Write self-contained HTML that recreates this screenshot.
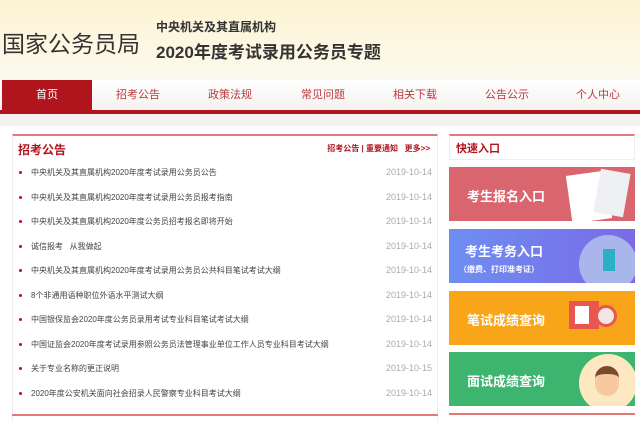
<!DOCTYPE html><html><head><meta charset="utf-8"><style>
*{margin:0;padding:0;box-sizing:border-box}
body{width:640px;height:422px;overflow:hidden;background:#fff;font-family:"Liberation Sans","Noto Sans CJK SC",sans-serif;position:relative}
.hd{position:absolute;left:0;top:0;width:640px;height:80px;background:linear-gradient(180deg,#fdf3d2,#fdf8e6 70%,#fbf9f0)}
.nav{position:absolute;top:80px;left:0;width:640px;height:31px;background:linear-gradient(#fff,#f4f2ee)}
.nav span{position:absolute;top:0;height:31px;line-height:31px;font-size:11px;color:#b83a40;width:90px;text-align:center}
.nav .on{background:#b0141d;color:#fff;left:2px}
.rl{position:absolute;top:110px;left:0;width:640px;height:4px;background:#b0141d}
.gs{position:absolute;top:114px;left:0;width:640px;height:12px;background:#f2f2f2}
.lp{position:absolute;left:12px;top:134px;width:426px;height:288px;border-top:2px solid #e37a7a;border-left:1px solid #eee;border-right:1px solid #eee}
.t{position:absolute;left:18px;top:141px;font-size:12px;color:#b0141d;font-weight:bold}
.more{position:absolute;right:210px;top:143px;font-size:8px;color:#b0141d;font-weight:bold}
.row{position:absolute;left:18px;font-size:8px;color:#444;width:414px}
.row:before{content:"";position:absolute;left:1px;top:4px;width:3px;height:3px;background:#b0141d;border-radius:50%}
.row i{font-style:normal;margin-left:13px}
.row b{position:absolute;right:0;top:0;color:#aaa;font-weight:normal;font-size:9px}
.sep{position:absolute;left:12px;top:414px;width:426px;height:2px;background:#e37a7a}
.rp{position:absolute;left:449px;top:134px;width:186px;height:26px;border:1px solid #eee;border-top:2px solid #e37a7a}
.rt{position:absolute;left:456px;top:140px;font-size:11px;color:#b0141d;font-weight:bold}
.bn{position:absolute;left:449px;width:186px;height:54px;color:#fff;font-weight:bold;font-size:13px;overflow:hidden}
.bn .x{position:absolute;left:18px;top:19px}
.bl{position:absolute;left:449px;top:413px;width:186px;height:2px;background:#e37a7a}
</style></head><body>
<div class="hd"></div>
<div style="position:absolute;left:2px;top:25px;font-size:23px;color:#333">国家公务员局</div>
<div style="position:absolute;left:156px;top:18px;font-size:12px;color:#333;font-weight:bold">中央机关及其直属机构</div>
<div style="position:absolute;left:156px;top:38px;font-size:17px;color:#333;font-weight:bold">2020年度考试录用公务员专题</div>
<div class="nav"><span class="on">首页</span><span style="left:93px">招考公告</span><span style="left:185px">政策法规</span><span style="left:278px">常见问题</span><span style="left:370px">相关下载</span><span style="left:462px">公告公示</span><span style="left:553px">个人中心</span></div>
<div class="rl"></div><div class="gs"></div>
<div class="lp"></div>
<div class="t">招考公告</div>
<div class="more">招考公告 | 重要通知 &nbsp; 更多&gt;&gt;</div>
<div class="row" style="top:167px"><i>中央机关及其直属机构2020年度考试录用公务员公告</i><b>2019-10-14</b></div>
<div class="row" style="top:192px"><i>中央机关及其直属机构2020年度考试录用公务员报考指南</i><b>2019-10-14</b></div>
<div class="row" style="top:216px"><i>中央机关及其直属机构2020年度公务员招考报名即将开始</i><b>2019-10-14</b></div>
<div class="row" style="top:241px"><i>诚信报考 &nbsp; 从我做起</i><b>2019-10-14</b></div>
<div class="row" style="top:265px"><i>中央机关及其直属机构2020年度考试录用公务员公共科目笔试考试大纲</i><b>2019-10-14</b></div>
<div class="row" style="top:290px"><i>8个非通用语种职位外语水平测试大纲</i><b>2019-10-14</b></div>
<div class="row" style="top:314px"><i>中国银保监会2020年度公务员录用考试专业科目笔试考试大纲</i><b>2019-10-14</b></div>
<div class="row" style="top:339px"><i>中国证监会2020年度考试录用参照公务员法管理事业单位工作人员专业科目考试大纲</i><b>2019-10-14</b></div>
<div class="row" style="top:363px"><i>关于专业名称的更正说明</i><b>2019-10-15</b></div>
<div class="row" style="top:388px"><i>2020年度公安机关面向社会招录人民警察专业科目考试大纲</i><b>2019-10-14</b></div>
<div class="sep"></div>
<div class="rp"></div><div class="rt">快速入口</div>
<div class="bn" style="top:167px;background:#d9666f"><span class="x">考生报名入口</span><div style="position:absolute;left:120px;top:6px;width:40px;height:48px;background:#fff;transform:rotate(-8deg)"></div><div style="position:absolute;left:148px;top:4px;width:30px;height:44px;background:#eef0f4;transform:rotate(10deg)"></div></div>
<div class="bn" style="top:229px;background:linear-gradient(90deg,#6e8ef2,#7a6ae6)"><span class="x" style="top:12px;left:16px">考生考务入口<br><span style="font-size:8px;margin-left:-6px">（缴费、打印准考证）</span></span><div style="position:absolute;left:130px;top:6px;width:58px;height:58px;border-radius:50%;background:#a9b6ec"></div><div style="position:absolute;left:154px;top:20px;width:12px;height:22px;background:#2bb0c8"></div></div>
<div class="bn" style="top:291px;background:#f9a51a"><span class="x">笔试成绩查询</span><div style="position:absolute;left:120px;top:10px;width:30px;height:28px;background:#e8564f"></div><div style="position:absolute;left:126px;top:15px;width:14px;height:18px;background:#fff"></div><div style="position:absolute;left:146px;top:14px;width:22px;height:22px;border-radius:50%;background:#f0e6e6;border:3px solid #e8564f"></div></div>
<div class="bn" style="top:352px;background:#3db56e"><span class="x">面试成绩查询</span><div style="position:absolute;left:130px;top:2px;width:58px;height:58px;border-radius:50%;background:#fde8c2"></div><div style="position:absolute;left:146px;top:14px;width:24px;height:30px;border-radius:12px;background:#f6c9a0;border-top:8px solid #7a4a2c"></div></div>
<div class="bl"></div>
</body></html>
